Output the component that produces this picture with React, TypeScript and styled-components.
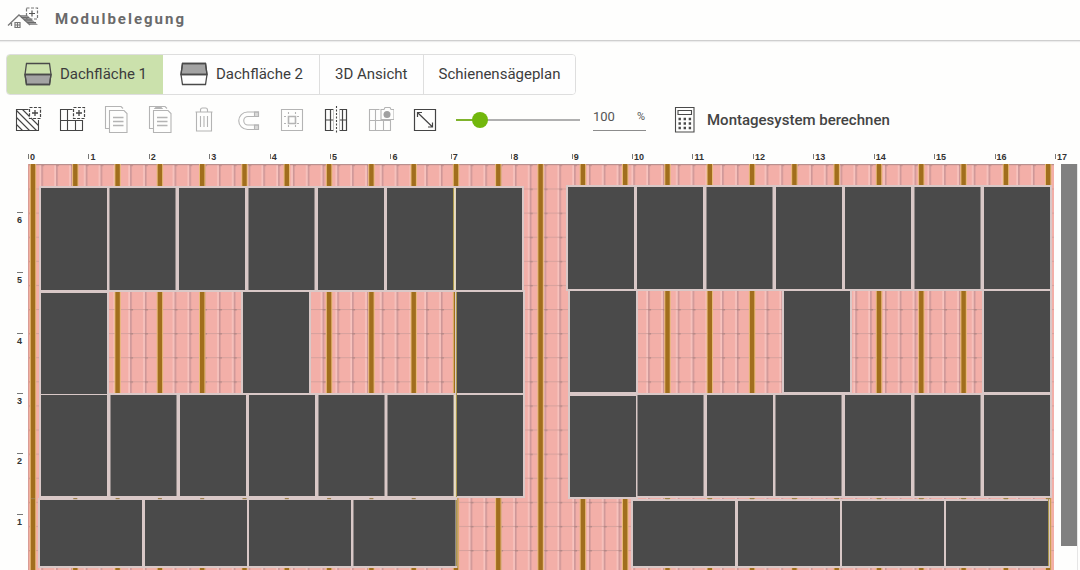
import React, { useState } from "react";
import styled, { createGlobalStyle } from "styled-components";

const GlobalStyle = createGlobalStyle`
  *, *::before, *::after { box-sizing: border-box; }
  body {
    margin: 0;
    overflow-x: hidden;
    background: #fefefd;
    color: #3c3c3c;
    font-family: Roboto, "Liberation Sans", sans-serif;
  }
  button, input { font: inherit; color: inherit; }
`;

const Header = styled.header`
  display: flex;
  align-items: center;
  gap: 16px;
  height: 41px;
  padding: 0 7px 3px;
  border-bottom: 1px solid #cfcfcf;
  box-shadow: 0 1px 1px #ececec;
`;

const Title = styled.h1`
  margin: 0;
  font-size: 15px;
  line-height: 20px;
  font-weight: 700;
  letter-spacing: 2px;
  color: #6a6a6a;
`;

const TabBar = styled.nav`
  display: flex;
  width: fit-content;
  margin: 13px 0 0 6px;
  border: 1px solid #dedede;
  border-radius: 4px;
  overflow: hidden;
`;

const Tab = styled.button<{ $active?: boolean; $divided?: boolean }>`
  display: flex;
  align-items: center;
  gap: 8px;
  height: 39px;
  padding: ${(p) => (p.$divided ? "0 15px 2px" : "0 16px 2px 17px")};
  border: 0;
  border-left: ${(p) => (p.$divided ? "1px solid #dedede" : "0")};
  background: ${(p) => (p.$active ? "#cbe1ac" : "#fefefe")};
  font-size: 15px;
  line-height: 20px;
  white-space: nowrap;
`;

const Toolbar = styled.div`
  display: flex;
  align-items: center;
  height: 50px;
  padding-left: 14px;
`;

const Tools = styled.div`
  display: flex;
  gap: 16px;
`;

const ToolButton = styled.button`
  display: flex;
  width: 28px;
  height: 28px;
  padding: 0;
  border: 0;
  background: none;
  color: #444;
  &:disabled { color: #b4b4b4; }
`;

const Slider = styled.input<{ $fill: number }>`
  appearance: none;
  width: 124px;
  height: 16px;
  margin: 0 13px 0 18px;
  background: linear-gradient(to right, #7fb32c ${(p) => p.$fill}%, #b0b0b0 ${(p) => p.$fill}%) center / 100% 2px no-repeat;
  &::-webkit-slider-thumb {
    appearance: none;
    width: 16px;
    height: 16px;
    border-radius: 50%;
    background: #71b70c;
  }
`;

const Percent = styled.label`
  display: flex;
  align-items: center;
  justify-content: space-between;
  width: 53px;
  height: 28px;
  margin-top: -6px;
  padding-right: 1px;
  border-bottom: 1px solid #8c8c8c;
  font-size: 11px;
  color: #555;
`;

const PercentInput = styled.input`
  width: 32px;
  padding: 0;
  border: 0;
  outline: 0;
  background: none;
  font-size: 13px;
  line-height: 20px;
`;

const Calculate = styled.button`
  display: flex;
  align-items: center;
  gap: 9px;
  margin-left: 24px;
  padding: 0;
  border: 0;
  background: none;
  font-size: 15px;
  line-height: 20px;
  font-weight: 500;
  color: #444;
`;

const RulerX = styled.div`
  display: flex;
  align-items: center;
  height: 19px;
  padding: 4px 25px 0 28px;
`;

const TickX = styled.div<{ $last?: boolean }>`
  display: flex;
  align-items: center;
  gap: 1px;
  flex: ${(p) => (p.$last ? "0 0 0" : "1 1 0")};
  width: 0;
  font: 700 9px/12px "Liberation Sans", sans-serif;
  color: #333;
  &::before {
    content: "";
    flex: none;
    width: 1px;
    height: 5px;
    background: #777;
  }
`;

const Plan = styled.main`
  display: grid;
  grid-template-columns: 28px minmax(0, 1fr) 26px;
  overflow: hidden;
`;

const RulerY = styled.div`
  display: flex;
  flex-direction: column;
  align-items: flex-end;
  padding: 48px 5px 0 0;
  margin-bottom: -4px;
`;

const TickY = styled.div`
  flex: 1 1 0;
  width: 6px;
  border-top: 1px solid #777;
  padding-top: 1px;
  font: 700 9px/12px "Liberation Sans", sans-serif;
  color: #333;
`;

const Roof = styled.svg`
  display: block;
  width: 100%;
  height: auto;
`;

const ScrollTrack = styled.div`
  padding-left: 7px;
  margin-right: 2px;
  border-right: 1px solid #e6e6e6;
`;

const ScrollThumb = styled.div`
  height: 94%;
  background: #808080;
`;

type Module = [x: number, y: number, w: number, h: number];

const row = (xs: number[], y: number, w: number, h: number): Module[] =>
  xs.map((x) => [x, y, w, h]);

// Module positions in roof-plan units, measured from the upper left roof corner.
const MODULES: Module[] = [
  ...row([13, 81.5, 151, 220.5, 290, 359, 428], 24, 66, 102),
  ...row([540, 609, 678.5, 748, 817, 886.5, 956], 23, 66, 102),
  [13, 129, 66, 101],
  ...row([215, 429], 128, 66, 101),
  ...row([542, 756, 956], 127, 66, 101),
  ...row([13, 82.5, 152, 221, 290.5, 359.5, 429], 231, 66, 101),
  [542, 232, 66, 101],
  ...row([609.5, 679, 747.5, 817, 886.5, 956], 231, 66, 101),
  ...row([12, 117, 221, 325.5], 336, 102, 66),
  ...row([605, 710, 814, 918], 337, 102, 65),
];

const RAILS = Array.from({ length: 25 }, (_, i) => 5 + i * 42.3);

function RoofPlan() {
  return (
    <Roof viewBox="0 0 1026 406" role="img" aria-label="Modulbelegung Dachfläche 1">
      <defs>
        <pattern id="tiles" x="13.3" y="0.4" width="14.8" height="24.1" patternUnits="userSpaceOnUse">
          <rect width="14.8" height="24.1" fill="#f3afa8" />
          <rect width="1.6" height="24.1" fill="#cc9697" />
          <rect x="13" width="1.8" height="24.1" fill="#f7c3be" />
          <rect width="14.8" height="1" fill="#d6a19d" />
          <rect x="0" width="3" height="1.4" fill="#b48886" />
        </pattern>
      </defs>
      <rect width="1026" height="406" fill="url(#tiles)" />
      <rect width="1026" height="1" fill="#b9908e" />
      <rect width="1" height="406" fill="#d99c95" />
      {RAILS.map((x) => (
        <g key={x}>
          <rect x={x - 3.2} width="6.4" height="406" fill="#e8b978" />
          <rect x={x - 2.2} width="4.4" height="406" fill="#a16e1d" />
        </g>
      ))}
      {MODULES.map(([x, y, w, h]) => (
        <rect key={`e${x}-${y}`} x={x - 2} y={y - 2} width={w + 4} height={h + 4} fill="#d9c8c7" />
      ))}
      {RAILS.filter((x) => x < 425 || x > 608).map((x) => (
        <rect key={`s${x}`} x={x - 2} y="334" width="4" height="1.2" fill="#9c7f4c" />
      ))}
      {MODULES.map(([x, y, w, h]) => (
        <rect key={`m${x}-${y}`} x={x} y={y} width={w} height={h} fill="#4a4a4a" />
      ))}
      <g fill="#ab984c">
        <rect x="425" y="24" width="1" height="102" />
        <rect x="428" y="128" width="1" height="205" />
        <rect x="428" y="336" width="1" height="66" />
        <rect x="1020" y="335" width="1" height="67" />
      </g>
      <g fill="#e9dfbd">
        <rect x="426" y="24" width="1.5" height="102" />
        <rect x="426" y="231" width="1.5" height="102" />
      </g>
    </Roof>
  );
}

function HouseIcon() {
  return (
    <svg width="32" height="24" viewBox="0 0 32 24" fill="none" stroke="#777">
      <path d="M12 8h8l11 10h-8z" fill="#999" stroke="none" />
      <path d="M1 18.500L12 8l11 10M4.500 16v3" strokeWidth="1.300" />
      <path d="M14 10.500h8M17 13h8M20 15.500h9" stroke="#6a6a6a" strokeWidth="1" />
      <path d="M19.500 1h11v11h-11z" strokeDasharray="3 1.500" strokeWidth="1.200" />
      <path d="M25 3.500v6M22 6.500h6" stroke="#555" strokeWidth="1.200" />
      <path d="M8 15.500h5v5H8zM10.500 15.500v5M8 18h5" strokeWidth="1.200" />
    </svg>
  );
}

function RoofSideIcon({ lower }: { lower?: boolean }) {
  return (
    <svg width="28" height="24" viewBox="0 0 28 24" fill="none" stroke="#4a4a4a" strokeWidth="1.300">
      <path d={lower ? "M1 12.500h26l-1.500 10h-23z" : "M2.500 1.500h23l1.500 11H1z"} fill="#a3a3a3" />
      <path d="M2.500 1.500h23L27 12.500 25.500 22.500h-23L1 12.500zM1 12.500h26" />
    </svg>
  );
}

const Icon = ({ children }: { children: React.ReactNode }) => (
  <svg width="28" height="28" viewBox="0 0 28 28" fill="none" stroke="currentColor" strokeWidth="1.1">
    {children}
  </svg>
);

const AddMark = () => (
  <>
    <path d="M15.500 1.500h11v11h-11z" strokeDasharray="3 1.400" strokeWidth="1.200" />
    <path d="M21 4v6M18 7h6" strokeWidth="1.300" />
  </>
);

const Sheet = () => (
  <>
    <path d="M7.500 4.500H22l3 3V26.500H7.500z" />
    <path d="M11 11.500h10.500M11 15.500h10.500M11 19.500h10.500" strokeWidth="1.300" />
    <path d="M7.500 22.500H3.500V.5H19l2 2" />
  </>
);

const TOOLS: { label: string; disabled?: boolean; art: React.ReactNode }[] = [
  {
    label: "Fläche belegen",
    art: (
      <>
        <path d="M14.500 3.500H2.500v21H24.500V14" />
        <path d="M2.500 4.500l20 20M8.500 3.500l7 7M17 12l7.500 7.500M2.500 11.500l13 13M2.500 18.500l6 6" />
        <AddMark />
      </>
    ),
  },
  {
    label: "Modul hinzufügen",
    art: (
      <>
        <path d="M14.500 3.500H2.500v21H24.500V14M2.500 14.500H24.500M9.500 3.500v21M17.500 14.500v10" />
        <AddMark />
      </>
    ),
  },
  { label: "Kopieren", disabled: true, art: <Sheet /> },
  {
    label: "Einfügen",
    disabled: true,
    art: (
      <>
        <Sheet />
        <path d="M9 2.500l3-3h1l3 3z" fill="currentColor" />
      </>
    ),
  },
  {
    label: "Löschen",
    disabled: true,
    art: <path d="M6.500 6.500v18.500h15v-18.500M5.500 6h17M10.500 5.500V4q0-2 2-2h3q2 0 2 2v1.500M10.500 10v11M14 10v11M17.500 10v11" />,
  },
  {
    label: "Magnet",
    disabled: true,
    art: (
      <>
        <path d="M24.500 6H13.500a8.500 8.500 0 0 0 0 17.500h11V19h-10.500a4.200 4.200 0 0 1 0-8.500h10.500z" />
        <path d="M20.500 6h4v4.500h-4zM20.500 19h4v4.500h-4z" fill="currentColor" fillOpacity=".5" />
      </>
    ),
  },
  {
    label: "Zentrieren",
    disabled: true,
    art: (
      <>
        <path d="M3.500 3.500h21v21h-21z" />
        <path d="M10.500 10.500h7v7h-7z" strokeWidth="1.600" />
        <path d="M10.500 6v3M17.500 6v3M10.500 19v3M17.500 19v3M6 10.500h3M6 17.500h3M19 10.500h3M19 17.500h3" strokeDasharray="2 1" />
      </>
    ),
  },
  {
    label: "Spiegeln",
    art: (
      <>
        <path d="M11.500 3.500h-8v21h8M17.500 3.500h7v21h-7M3.500 14h8M17.500 14h7M8.500 3.500v21M20.500 3.500v21" strokeWidth="1.200" />
        <path d="M11.500 3.500v21M17.500 3.500v21" stroke="#bbb" strokeWidth=".8" />
        <path d="M14.500 0v28" strokeDasharray="2 1.500" />
      </>
    ),
  },
  {
    label: "Foto",
    disabled: true,
    art: (
      <>
        <path d="M13.500 3.500h-10v21h21V14M3.500 14.500h21M9.500 3.500v21M17.500 14.500v10" />
        <path d="M15 3.500h3l1-2h5l1 2h3v10H15z" fill="#fefefd" />
        <circle cx="21" cy="8.500" r="3.500" fill="#a0a0a0" stroke="none" />
      </>
    ),
  },
  {
    label: "Einpassen",
    art: (
      <>
        <path d="M4.500 3.500h21v21h-21z" strokeWidth="1.200" />
        <path d="M8 7l14 13.500M7.500 11V6.500H12M22.500 16.500v4.500H18" strokeWidth="1.200" />
      </>
    ),
  },
];

function CalculatorIcon() {
  return (
    <svg width="28" height="28" viewBox="0 0 28 28" fill="none" stroke="#4a4a4a" strokeWidth="1.100">
      <path d="M5.500 1.500h18.500v24.500h-18.500zM8 4.500h13.500v4H8z" />
      <path d="M8.500 13h13M8.500 17.500h13M8.500 22h13" strokeWidth="2.400" strokeDasharray="2.400 2.700" />
    </svg>
  );
}

const MIN_ZOOM = 10;
const MAX_ZOOM = 600;

export default function App() {
  const [tab, setTab] = useState(0);
  const [zoom, setZoom] = useState(100);
  const fill = ((zoom - MIN_ZOOM) / (MAX_ZOOM - MIN_ZOOM)) * 100;

  return (
    <>
      <GlobalStyle />
      <Header>
        <HouseIcon />
        <Title>Modulbelegung</Title>
      </Header>
      <TabBar>
        <Tab $active={tab === 0} onClick={() => setTab(0)}><RoofSideIcon lower />Dachfläche 1</Tab>
        <Tab $active={tab === 1} onClick={() => setTab(1)}><RoofSideIcon />Dachfläche 2</Tab>
        <Tab $divided $active={tab === 2} onClick={() => setTab(2)}>3D Ansicht</Tab>
        <Tab $divided $active={tab === 3} onClick={() => setTab(3)}>Schienensägeplan</Tab>
      </TabBar>
      <Toolbar>
        <Tools>
          {TOOLS.map((t) => (
            <ToolButton key={t.label} aria-label={t.label} disabled={t.disabled}>
              <Icon>{t.art}</Icon>
            </ToolButton>
          ))}
        </Tools>
        <Slider
          type="range"
          aria-label="Zoom"
          min={MIN_ZOOM}
          max={MAX_ZOOM}
          value={zoom}
          $fill={fill}
          onChange={(e) => setZoom(Number(e.target.value))}
        />
        <Percent>
          <PercentInput
            aria-label="Zoom in Prozent"
            value={zoom}
            onChange={(e) => setZoom(Number(e.target.value) || 0)}
          />
          %
        </Percent>
        <Calculate><CalculatorIcon />Montagesystem berechnen</Calculate>
      </Toolbar>
      <RulerX>
        {Array.from({ length: 18 }, (_, i) => (
          <TickX key={i} $last={i === 17}>{i}</TickX>
        ))}
      </RulerX>
      <Plan>
        <RulerY>
          {[6, 5, 4, 3, 2, 1].map((n) => <TickY key={n}>{n}</TickY>)}
        </RulerY>
        <RoofPlan />
        <ScrollTrack><ScrollThumb /></ScrollTrack>
      </Plan>
    </>
  );
}
